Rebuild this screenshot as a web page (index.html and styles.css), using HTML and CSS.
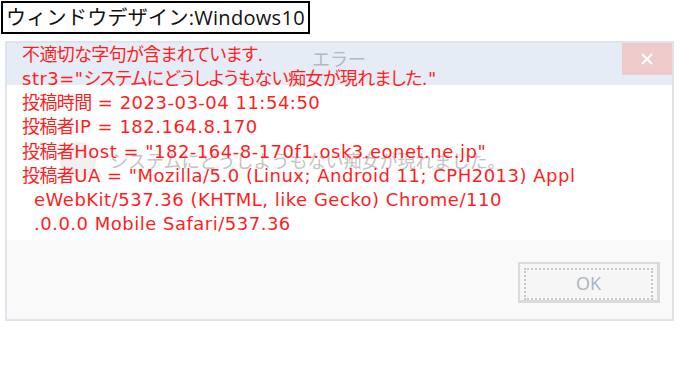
FILE: index.html
```html
<!DOCTYPE html>
<html lang="ja">
<head>
    <meta charset="UTF-8">
    <title>ウィンドウデザイン</title>
    <link rel="stylesheet" href="styles.css">
</head>
<body>
<p class="caption">ウィンドウデザイン:Windows10</p>

<div class="dialog">
    <div class="close">
        <svg width="14" height="14" viewBox="0 0 14 14"><path d="M2 2L12 12M12 2L2 12" stroke="#fff" stroke-width="2"/></svg>
    </div>
    <p class="ghost-title">エラー</p>
    <div class="ghost-msg">
        <span class="ghost-icon"></span>
        <span>システムにどうしようもない痴女が現れました。</span>
    </div>

    <div class="message">
        <p><span class="jp">不適切な字句が含まれています</span>.</p>
        <p>str3="<span class="jp">システムにどうしようもない痴女が現れました</span>."</p>
        <p><span class="jp">投稿時間</span> = 2023-03-04 11:54:50</p>
        <p><span class="jp">投稿者</span>IP = 182.164.8.170</p>
        <p><span class="jp">投稿者</span>Host = "182-164-8-170f1.osk3.eonet.ne.jp"</p>
        <p><span class="jp">投稿者</span>UA = "Mozilla/5.0 (Linux; Android 11; CPH2013) Appl</p>
        <p class="cont">eWebKit/537.36 (KHTML, like Gecko) Chrome/110</p>
        <p class="cont">.0.0.0 Mobile Safari/537.36</p>
    </div>

    <div class="footer">
        <button class="ok"><span>OK</span></button>
    </div>
</div>
</body>
</html>
```

FILE: styles.css
```css
body {
    margin: 0;
    font-family: "Open Sans", "Noto Sans CJK JP", sans-serif;
    background: #fff;
}

p {
    margin: 0;
}

.caption {
    display: inline-block;
    margin: 1px 0 0 1px;
    padding: 0 3px;
    border: 2px solid #000;
    font-size: 20px;
    letter-spacing: 0.3px;
    line-height: 29px;
    color: #111;
}

.dialog {
    position: relative;
    width: 665px;
    height: 276px;
    margin: 7px 0 0 5px;
    border: 2px solid #dfe4eb;
    background: linear-gradient(#e6ecf6 0, #e6ecf6 42px, #fff 42px, #fff 197px, #f9f9f9 197px);
    display: flex;
    flex-direction: column;
}

.close {
    position: absolute;
    top: 0;
    right: 0;
    width: 50px;
    height: 32px;
    background: #efcaca;
    display: flex;
    align-items: center;
    justify-content: center;
}

.ghost-title {
    position: absolute;
    left: 305px;
    top: 2px;
    font-size: 18px;
    color: #b4b8be;
}

.ghost-msg {
    position: absolute;
    left: 53px;
    top: 99px;
    display: flex;
    align-items: center;
    gap: 14px;
    font-size: 18px;
    color: #b0b0b0;
    opacity: 0.75;
}

.ghost-icon {
    width: 36px;
    height: 36px;
    border-radius: 50%;
    background: #ececec;
}

.message {
    position: relative;
    padding: 0 0 0 15px;
    height: 197px;
    color: #ff1e1e;
    font-family: "DejaVu Sans", "Noto Sans CJK JP", sans-serif;
    font-size: 18px;
    font-feature-settings: "palt";
    letter-spacing: 0.5px;
    line-height: 24.15px;
}

.message .jp {
    letter-spacing: -0.6px;
}

.message .cont {
    padding-left: 12px;
}

.footer {
    flex: 1;
    display: flex;
    justify-content: flex-end;
    align-items: flex-start;
    padding: 22px 12px 0 0;
}

.ok {
    width: 142px;
    height: 41px;
    padding: 4px;
    border: 2px solid #dadada;
    border-right-width: 3px;
    border-bottom-width: 3px;
    background: #f6f6f6;
    font-family: inherit;
}

.ok span {
    display: block;
    height: 100%;
    border: 2px dotted #c8c8c8;
    color: #a9b3c4;
    font-size: 18px;
    line-height: 26px;
}
```
